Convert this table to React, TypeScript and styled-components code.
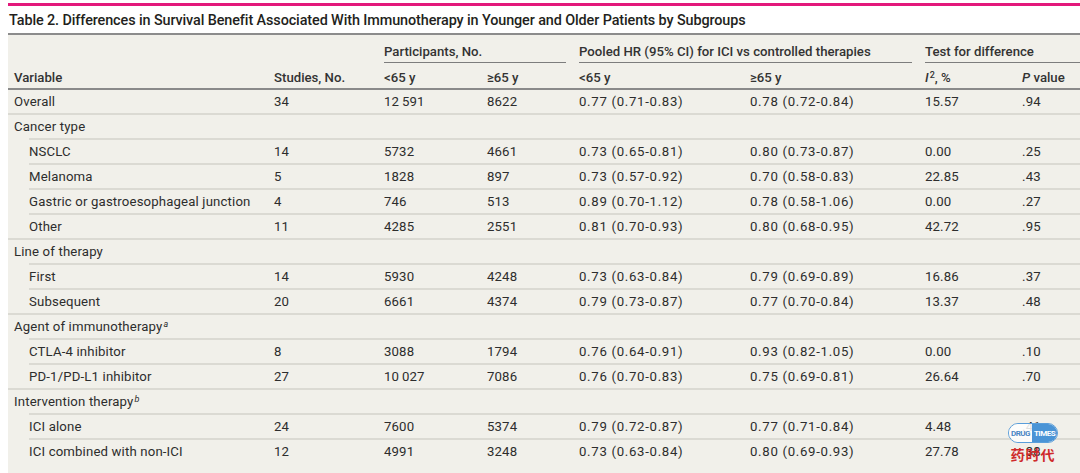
import styled, { createGlobalStyle } from "styled-components";

const GlobalStyle = createGlobalStyle`
  html, body {
    margin: 0;
    padding: 0;
    background: #fff;
  }
  body {
    font-family: Roboto, "Liberation Sans", sans-serif;
    color: #2a2a2a;
  }
`;

const COLS = "266px 110px 103px 92px 171px 175px 97px 58px";
const CHILD_COLS = "245px 110px 103px 92px 171px 175px 97px 58px";

const Page = styled.div`
  position: relative;
  width: 1072px;
  height: 470px;
  padding: 3px 0 0 8px;
  box-sizing: content-box;
  overflow: hidden;
`;

const PinkBar = styled.div`
  height: 3px;
  background: #e3187b;
`;

const Title = styled.h1`
  margin: 0;
  padding: 5px 0 2px 1px;
  font-size: 14.4px;
  line-height: 20px;
  font-weight: 500;
  color: #231f20;
  letter-spacing: -0.1px;
  white-space: nowrap;
`;

const Table = styled.div`
  border-top: 2px solid #8c8c8c;
  background: #f1f0ea;
  font-size: 13.2px;
  height: 440px;
`;

const HeadRow = styled.div`
  display: grid;
  grid-template-columns: 376px 195px 346px 155px;
  height: 28px;
  align-items: end;
`;

const GroupHead = styled.div<{ $gap?: number }>`
  padding-right: ${(p) => p.$gap ?? 0}px;
  font-weight: 500;
  color: #333;
`;

const GroupLabel = styled.div`
  padding-bottom: 3px;
  border-bottom: 1.5px solid #7d7d7d;
  white-space: nowrap;
`;

const SubHeadRow = styled.div`
  display: grid;
  grid-template-columns: ${COLS};
  height: 25px;
  box-sizing: border-box;
  padding-bottom: 3px;
  align-items: end;
  border-bottom: 2px solid #8a8a8a;
  font-weight: 500;
  color: #333;
  height: 27px;
  div:first-child {
    padding-left: 6px;
  }
`;

const Row = styled.div<{ $child?: boolean; $first?: boolean }>`
  display: grid;
  grid-template-columns: ${(p) => (p.$child ? CHILD_COLS : COLS)};
  margin-left: ${(p) => (p.$child ? 21 : 0)}px;
  height: 23px;
  align-items: center;
  border-top: ${(p) => (p.$first ? "none" : "2px solid #dbdad3")};
  color: #2d2d2d;
`;

const Cell = styled.div<{ $pad?: boolean; $wide?: boolean }>`
  padding-left: ${(p) => (p.$pad ? 6 : 0)}px;
  letter-spacing: ${(p) => (p.$wide ? 0.7 : 0.15)}px;
  white-space: nowrap;
`;

const Sup = styled.sup`
  font-size: 9px;
  font-style: italic;
  line-height: 0;
  margin-left: 1px;
  vertical-align: 4px;
`;

const Ital = styled.i`
  font-style: italic;
`;

const Badge = styled.div`
  position: absolute;
  left: 1008px;
  top: 423px;
  width: 50px;
  display: flex;
  flex-direction: column;
  align-items: center;
  gap: 3px;
`;

const Pill = styled.div`
  display: flex;
  width: 50px;
  height: 20px;
  border: 1.5px solid #5a9edb;
  border-radius: 10px;
  overflow: hidden;
  box-sizing: border-box;
  font-family: Roboto, sans-serif;
  font-size: 8px;
  font-weight: 700;
  letter-spacing: -0.5px;
`;

const PillHalf = styled.span<{ $filled?: boolean }>`
  flex: ${(p) => (p.$filled ? "0 0 25px" : "1")};
  display: flex;
  align-items: center;
  justify-content: center;
  background: ${(p) => (p.$filled ? "#4a94d6" : "rgba(255,255,255,0.85)")};
  color: ${(p) => (p.$filled ? "#fff" : "#4a86c4")};
`;

const Brand = styled.div`
  font-family: "Noto Sans CJK SC", sans-serif;
  font-weight: 700;
  font-size: 14px;
  line-height: 16px;
  color: #cf2a2a;
  letter-spacing: 1px;
`;

type Kind = "main" | "group" | "child";

interface Item {
  kind: Kind;
  label: React.ReactNode;
  values?: string[];
}

const rows: Item[] = [
  { kind: "main", label: "Overall", values: ["34", "12\u2009591", "8622", "0.77 (0.71-0.83)", "0.78 (0.72-0.84)", "15.57", ".94"] },
  { kind: "group", label: "Cancer type" },
  { kind: "child", label: "NSCLC", values: ["14", "5732", "4661", "0.73 (0.65-0.81)", "0.80 (0.73-0.87)", "0.00", ".25"] },
  { kind: "child", label: "Melanoma", values: ["5", "1828", "897", "0.73 (0.57-0.92)", "0.70 (0.58-0.83)", "22.85", ".43"] },
  { kind: "child", label: "Gastric or gastroesophageal junction", values: ["4", "746", "513", "0.89 (0.70-1.12)", "0.78 (0.58-1.06)", "0.00", ".27"] },
  { kind: "child", label: "Other", values: ["11", "4285", "2551", "0.81 (0.70-0.93)", "0.80 (0.68-0.95)", "42.72", ".95"] },
  { kind: "group", label: "Line of therapy" },
  { kind: "child", label: "First", values: ["14", "5930", "4248", "0.73 (0.63-0.84)", "0.79 (0.69-0.89)", "16.86", ".37"] },
  { kind: "child", label: "Subsequent", values: ["20", "6661", "4374", "0.79 (0.73-0.87)", "0.77 (0.70-0.84)", "13.37", ".48"] },
  { kind: "group", label: <>Agent of immunotherapy<Sup>a</Sup></> },
  { kind: "child", label: "CTLA-4 inhibitor", values: ["8", "3088", "1794", "0.76 (0.64-0.91)", "0.93 (0.82-1.05)", "0.00", ".10"] },
  { kind: "child", label: "PD-1/PD-L1 inhibitor", values: ["27", "10\u2009027", "7086", "0.76 (0.70-0.83)", "0.75 (0.69-0.81)", "26.64", ".70"] },
  { kind: "group", label: <>Intervention therapy<Sup>b</Sup></> },
  { kind: "child", label: "ICI alone", values: ["24", "7600", "5374", "0.79 (0.72-0.87)", "0.77 (0.71-0.84)", "4.48", ".41"] },
  { kind: "child", label: "ICI combined with non-ICI", values: ["12", "4991", "3248", "0.73 (0.63-0.84)", "0.80 (0.69-0.93)", "27.78", ".38"] },
];

export default function App() {
  return (
    <Page>
      <GlobalStyle />
      <PinkBar />
      <Title>
        Table 2. Differences in Survival Benefit Associated With Immunotherapy in Younger and Older Patients by Subgroups
      </Title>
      <Table>
        <HeadRow>
          <div />
          <GroupHead $gap={13}>
            <GroupLabel>Participants, No.</GroupLabel>
          </GroupHead>
          <GroupHead $gap={13}>
            <GroupLabel>Pooled HR (95% CI) for ICI vs controlled therapies</GroupLabel>
          </GroupHead>
          <GroupHead>
            <GroupLabel>Test for difference</GroupLabel>
          </GroupHead>
        </HeadRow>
        <SubHeadRow>
          <div>Variable</div>
          <div>Studies, No.</div>
          <div>&lt;65 y</div>
          <div>≥65 y</div>
          <div>&lt;65 y</div>
          <div>≥65 y</div>
          <div>
            <Ital>I</Ital>
            <Sup style={{ fontStyle: "normal" }}>2</Sup>, %
          </div>
          <div>
            <Ital>P</Ital> value
          </div>
        </SubHeadRow>
        {rows.map((r, i) => (
          <Row key={i} $child={r.kind === "child"} $first={i === 0}>
            <Cell $pad={r.kind !== "child"}>{r.label}</Cell>
            {(r.values ?? []).map((v, j) => (
              <Cell key={j} $wide={j === 3 || j === 4}>
                {v}
              </Cell>
            ))}
          </Row>
        ))}
      </Table>
      <Badge>
        <Pill>
          <PillHalf>DRUG</PillHalf>
          <PillHalf $filled>TIMES</PillHalf>
        </Pill>
        <Brand>药时代</Brand>
      </Badge>
    </Page>
  );
}
